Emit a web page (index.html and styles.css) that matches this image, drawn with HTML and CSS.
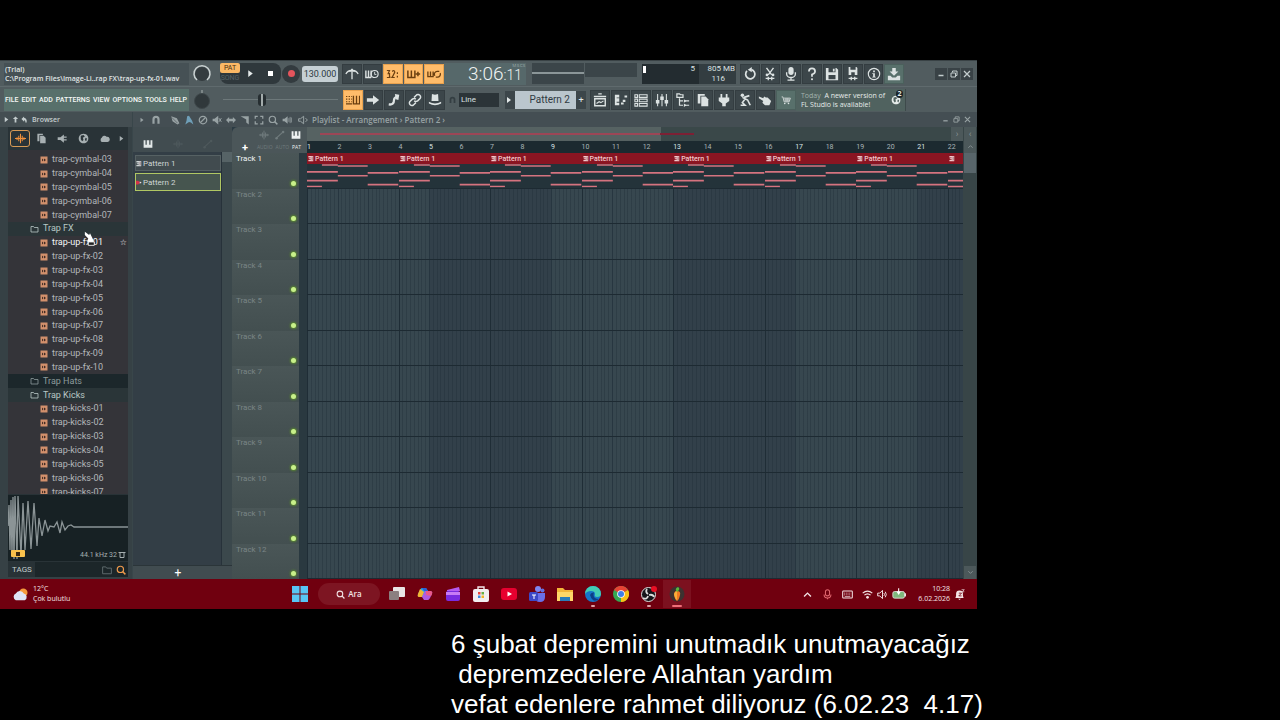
FILE: index.html
```
<!DOCTYPE html>
<html lang="tr">
<head>
    <meta charset="UTF-8">
    <title>FL Studio</title>
    <link rel="stylesheet" href="styles.css">
</head>
<body>
    <!-- icon sprite -->
    <svg class="sprite" aria-hidden="true">
        <symbol id="i-metro" viewBox="0 0 16 16"><path d="M1 8q2-4 6-4M15 8q-2-4-6-4M8 14V2" fill="none" stroke="currentColor" stroke-width="1.5"/><path d="M4 6l4-4 4 4-3-1H7z"/></symbol>
        <symbol id="i-wait" viewBox="0 0 16 16"><path d="M1 4v8h6M4 4v8M7 4v8" fill="none" stroke="currentColor" stroke-width="1.6"/><circle cx="11" cy="8" r="4" fill="none" stroke="currentColor" stroke-width="1.3"/><path d="M11 5.500v3h2" fill="none" stroke="currentColor"/></symbol>
        <symbol id="i-count" viewBox="0 0 16 16"><path d="M1 4h3L2.500 7.500H4V12H1M7 5q3-2 3 1l-3 6h3M13 6v2M13 10v2M5.500 11v1" fill="none" stroke="currentColor" stroke-width="1.4"/></symbol>
        <symbol id="i-over" viewBox="0 0 16 16"><path d="M1 4v8h8V4M5 4v8M10 8h5M12.500 5.500v5" fill="none" stroke="currentColor" stroke-width="1.7"/></symbol>
        <symbol id="i-loop" viewBox="0 0 16 16"><path d="M1 5v6h6V5M4 5v6M9 10a3.200 3.200 0 0 1 3-5h2M15 7a3.200 3.200 0 0 1-3 4.500h-2" fill="none" stroke="currentColor" stroke-width="1.5"/></symbol>
        <symbol id="i-undo" viewBox="0 0 16 16"><path d="M4.500 4.500a5.300 5.300 0 1 0 5-1.500" fill="none" stroke="currentColor" stroke-width="2"/><path d="M10 0v6L5.500 3z"/></symbol>
        <symbol id="i-cut" viewBox="0 0 16 16"><path d="M4 1l6 8M12 1L6 9" fill="none" stroke="currentColor" stroke-width="1.600"/><circle cx="4.500" cy="9" r="1.500"/><circle cx="11.500" cy="9" r="1.500"/><path d="M3 13h10M6 11v4M10 11v4" stroke="currentColor" stroke-width="1.500"/></symbol>
        <symbol id="i-mic" viewBox="0 0 16 16"><rect x="5" y="0" width="6" height="9" rx="3"/><path d="M3 6v2a5 4 0 0 0 10 0V6M8 12v3M4 15h8" fill="none" stroke="currentColor" stroke-width="1.500"/></symbol>
        <symbol id="i-help" viewBox="0 0 16 16"><path d="M4.500 5q0-3.500 3.500-3.500T11.500 5Q11.500 7 8 8.500V11" fill="none" stroke="currentColor" stroke-width="2"/><rect x="7" y="13" width="2" height="2"/></symbol>
        <symbol id="i-save" viewBox="0 0 16 16"><path fill-rule="evenodd" d="M1 1h12l2 2v12H1zM4 1v5h8V1zM4 9v5h8V9zM9 2h2v3H9z"/></symbol>
        <symbol id="i-savenew" viewBox="0 0 16 16"><path fill-rule="evenodd" d="M3 0h9l1 1v8H3zM5 0v3h6V0zM6 6v3h4V6z"/><path d="M3 13h10M6 11v4M10 11v4" stroke="currentColor" stroke-width="1.500"/></symbol>
        <symbol id="i-info" viewBox="0 0 16 16"><circle cx="8" cy="8" r="6.500" fill="none" stroke="currentColor" stroke-width="1.300"/><path d="M7 4h2v2H7zM6 7h3v4h1v1H6v-1h1V8H6z"/></symbol>
        <symbol id="i-down" viewBox="0 0 16 16"><path d="M6 1h4v4h3L8 10 3 5h3zM1 10h3l2 2h4l2-2h3v5H1z"/></symbol>
        <symbol id="i-keys" viewBox="0 0 16 16"><path d="M0 4h1.500M3 4h1.500M6 4h1M0 7h1.500M3 7h1.500M6 7h1M0 10h1.500M3 10h1.500M6 10h1M0 12.500h7" stroke="currentColor" stroke-width="1.400"/><path d="M8.500 3v9.500h7V3M12 3v9" fill="none" stroke="currentColor" stroke-width="1.500"/></symbol>
        <symbol id="i-right" viewBox="0 0 16 16"><path d="M1 6h7V2.500L15 8l-7 5.500V10H1z"/></symbol>
        <symbol id="i-slide" viewBox="0 0 16 16"><path d="M2 13q6 1 6-5 0-3 4-4" fill="none" stroke="currentColor" stroke-width="2.600"/><path d="M9 1l5 1-1 6-3-1z"/></symbol>
        <symbol id="i-link" viewBox="0 0 16 16"><path d="M7 5l3-3q2-1 3.500.5t.5 3.500l-3 3q-2 1.500-4 0M9 11l-3 3q-2 1-3.500-.5T2 10l3-3q2-1.500 4 0" fill="none" stroke="currentColor" stroke-width="1.700"/></symbol>
        <symbol id="i-hat" viewBox="0 0 16 16"><path d="M4.500 1l3.500 1 3.500-1 .5 8H4z"/><path d="M1 10q7 4 14 0v2q-7 4-14 0z"/></symbol>
        <symbol id="i-playlist" viewBox="0 0 16 16"><path d="M1 4h14M2 6.500h12v8H2z" fill="none" stroke="currentColor" stroke-width="1.600"/><path d="M4 12l3-2 2 1 3-2M6 1h4" stroke="currentColor" stroke-width="1.300" fill="none"/></symbol>
        <symbol id="i-proll" viewBox="0 0 16 16"><path d="M1 2h5v3H3v1h3v4H3v1h3v3H1z"/><path d="M8 12h3M10 9h3M12 4h3" stroke="currentColor" stroke-width="2.500" fill="none"/></symbol>
        <symbol id="i-rack" viewBox="0 0 16 16"><path d="M1 2h3v3H1zM6 2h9v3H6zM1 7h3v3H1zM6 7h9v3H6zM1 12h3v3H1zM6 12h9v3H6z" fill="none" stroke="currentColor" stroke-width="1.200"/></symbol>
        <symbol id="i-mixer" viewBox="0 0 16 16"><path d="M3 1v14M8 1v14M13 1v14" stroke="currentColor" stroke-width="1.200"/><rect x="1" y="8" width="4" height="4"/><rect x="6" y="4" width="4" height="4"/><rect x="11" y="8" width="4" height="4"/></symbol>
        <symbol id="i-tree" viewBox="0 0 16 16"><path d="M1 1h3l1 1h3v3H1zM4 6v8h4M4 9h4M10 9h5M10 14h5" fill="none" stroke="currentColor" stroke-width="1.400"/><path d="M9 7l3 2-3 2zM9 12l3 2-3 2z"/></symbol>
        <symbol id="i-files" viewBox="0 0 16 16"><path d="M2 1h8v2H5v9H2z"/><path d="M6 4h5l3 3v8H6z"/></symbol>
        <symbol id="i-plug" viewBox="0 0 16 16"><path d="M4 1h2v4h4V1h2v4h2v4l-4 3v3H6v-3L2 9V5h2z"/></symbol>
        <symbol id="i-tool" viewBox="0 0 16 16"><circle cx="5" cy="2.500" r="2"/><path d="M5 5l6 3 3 6M8 7l-3 4 3 3H3M7 5l6-2" stroke="currentColor" stroke-width="1.900" fill="none"/></symbol>
        <symbol id="i-hand" viewBox="0 0 16 16"><path d="M1 4l5 2 1-2 2 1 2 0 4 4-2 5H8L5 11l1-2-5-3z"/></symbol>
        <symbol id="i-cart" viewBox="0 0 16 16"><path d="M1 3h2l2 8h8l2-6H4M5 8h9M8 5v6M11 5v6" fill="none" stroke="currentColor" stroke-width="1.300"/><circle cx="6" cy="13.500" r="1.300"/><circle cx="12" cy="13.500" r="1.300"/></symbol>
        <symbol id="i-globe" viewBox="0 0 16 16"><path fill-rule="evenodd" d="M8 1a7 7 0 1 0 .1 0zM4 4l4-1 2 2-3 2 1 3-2 2-2-3zM11 7l2 1-1 4-2-2z"/></symbol>
        <symbol id="i-magnet" viewBox="0 0 16 16"><path d="M4 14V7a4 4 0 0 1 8 0v7" fill="none" stroke="currentColor" stroke-width="3.500"/></symbol>
        <symbol id="i-pencil" viewBox="0 0 16 16"><path d="M2 2l9 3 4 8-3 2-8-5z" /><path d="M3 4l9 9" stroke="#454f54"/></symbol>
        <symbol id="i-brush" viewBox="0 0 16 16"><path d="M5 2l3-1 5 8 2 6-4-3-3-1-6 4 2-6z"/></symbol>
        <symbol id="i-ban" viewBox="0 0 16 16"><circle cx="8" cy="8" r="6" fill="none" stroke="currentColor" stroke-width="2"/><path d="M4 12l8-8" stroke="currentColor" stroke-width="2"/></symbol>
        <symbol id="i-mute" viewBox="0 0 16 16"><path d="M1 6h3l6-5v14l-6-5H1z"/><path d="M11 5l4 6M15 5l-4 6" stroke="currentColor" stroke-width="1.500"/></symbol>
        <symbol id="i-slip" viewBox="0 0 16 16"><path d="M0 8l5-5v3h6V3l5 5-5 5v-3H5v3z"/></symbol>
        <symbol id="i-slice" viewBox="0 0 16 16"><path d="M1 2h13v13l-4-3V7z"/></symbol>
        <symbol id="i-select" viewBox="0 0 16 16"><path d="M2 6V2h4M10 2h4v4M14 10v4h-4M6 14H2v-4" fill="none" stroke="currentColor" stroke-width="2"/></symbol>
        <symbol id="i-zoom" viewBox="0 0 16 16"><circle cx="7" cy="7" r="5" fill="none" stroke="currentColor" stroke-width="1.900"/><path d="M10.500 10.500L15 15" stroke="currentColor" stroke-width="2.300"/></symbol>
        <symbol id="i-sound" viewBox="0 0 16 16"><path d="M1 6h3l5-4v12l-5-4H1z"/><path d="M11 5v6M13 3v10M15 4v8" stroke="currentColor" stroke-width="1.200"/></symbol>
        <symbol id="i-speaker" viewBox="0 0 16 16"><path d="M1 6h3l5-4v12l-5-4H1zM12 5l3 3-3 3" fill="none" stroke="currentColor" stroke-width="1.600"/></symbol>
        <symbol id="i-wave" viewBox="0 0 16 16"><path d="M0 8h16M3 6v4M5.500 4v8M8 1v14M10.500 4v8M13 6v4" stroke="currentColor" stroke-width="1.500"/></symbol>
        <symbol id="i-horn" viewBox="0 0 16 16"><path d="M1 6h4l5-4v3h4v2h-4v2h4v2h-4v3l-5-4H1z"/></symbol>
        <symbol id="i-cloud" viewBox="0 0 16 16"><path d="M4 13a3.500 3.500 0 0 1 0-6 4 4 0 0 1 7-1.500A3.800 3.800 0 0 1 12.500 13z"/></symbol>
        <symbol id="i-piano" viewBox="0 0 16 16"><path d="M1 2h3v7h2V2h4v7h2V2h3v12H1z"/></symbol>
        <symbol id="i-line" viewBox="0 0 16 16"><path d="M2 13L13 3" stroke="currentColor" stroke-width="2"/><circle cx="2.500" cy="13" r="2"/><circle cx="13" cy="3" r="2"/></symbol>
        <symbol id="i-folder" viewBox="0 0 16 16"><path d="M1 3h5l1.500 2H15v9H1z" fill="none" stroke="currentColor" stroke-width="1.600"/></symbol>
        <symbol id="i-tri" viewBox="0 0 16 16"><path d="M4 2l8 6-8 6z"/></symbol>
        <symbol id="i-up" viewBox="0 0 16 16"><path d="M8 1l6 6h-4v8H6V7H2z"/></symbol>
        <symbol id="i-back" viewBox="0 0 16 16"><path d="M7 1v3q7 1 6 11h-3q1-5-3-6v4L1 7z"/></symbol>
        <symbol id="i-min" viewBox="0 0 16 16"><path d="M3 11h10" stroke="currentColor" stroke-width="3"/></symbol>
        <symbol id="i-max" viewBox="0 0 16 16"><path d="M2 6h9v8H2zM5 5V2h9v9h-3" fill="none" stroke="currentColor" stroke-width="2"/></symbol>
        <symbol id="i-close" viewBox="0 0 16 16"><path d="M2 2l12 12M14 2L2 14" stroke="currentColor" stroke-width="2.500"/></symbol>
        <symbol id="i-chev" viewBox="0 0 16 16"><path d="M3 11l5-5 5 5" fill="none" stroke="currentColor" stroke-width="2"/></symbol>
        <symbol id="i-sample" viewBox="0 0 16 16"><rect x="1" y="1" width="14" height="14" fill="#d2906c"/><path d="M4 5v6l3-3zM8 5v6l4-3z" fill="#3d2822"/></symbol>
        <symbol id="i-pat" viewBox="0 0 16 16"><path d="M1 1h13v14H1v-3h6v-2H2V7h5V5H1z"/><path d="M11 3v10" stroke="#5a2028" stroke-width="1.500"/></symbol>
        <symbol id="i-marker" viewBox="0 0 16 16"><path d="M0 3h6l5 5-5 5H0z"/><path d="M10 5l5 3-5 3z" fill="#f0dfe2"/></symbol>
        <symbol id="notes" viewBox="0 0 92 24" preserveAspectRatio="none"><path d="M15 1h16M31 2h30M0 8h31M61 9h31M31 12h30M0 17h31M61 21h31M0 23h15" stroke="#d5737f" stroke-width="1.700"/></symbol>
    </svg>

    <main class="recording">
        <section class="daw">
            <header class="toolbar">
                <div class="row">
                    <div class="hint">(Trial)<br>C:\Program Files\Image-Li..rap FX\trap-up-fx-01.wav</div>
                    <svg class="knob" viewBox="0 0 20 20"><circle cx="10" cy="10" r="7" fill="#343c3f"/><path d="M5 16a8 8 0 1 1 10 0" fill="none" stroke="#c9d1d1" stroke-width="1.500"/></svg>
                    <div class="transport">
                        <div class="mode"><button class="pat">PAT</button><button class="song">SONG</button></div>
                        <button aria-label="Play"><svg class="ic"><use href="#i-tri"/></svg></button>
                        <button aria-label="Stop"><span class="stop"></span></button>
                    </div>
                    <button class="record" aria-label="Record"><span></span></button>
                    <input class="tempo" aria-label="Tempo" value="130.000">
                    <div class="tools five">
                        <button aria-label="Metronome"><svg class="ic"><use href="#i-metro"/></svg></button>
                        <button aria-label="Wait for input"><svg class="ic"><use href="#i-wait"/></svg></button>
                        <button class="on" aria-label="Countdown"><svg class="ic"><use href="#i-count"/></svg></button>
                        <button class="on" aria-label="Overdub"><svg class="ic"><use href="#i-over"/></svg></button>
                        <button class="on" aria-label="Loop record"><svg class="ic"><use href="#i-loop"/></svg></button>
                    </div>
                    <div class="clock"><span>3:06</span><small>:11</small><sup>M:S:CS</sup></div>
                    <div class="scope"><i></i><i></i></div>
                    <div class="cpu">
                        <div class="meter"></div>
                        <span>5</span><span>805 MB</span>
                        <span></span><span class="voices">116</span>
                    </div>
                    <div class="tools eight">
                        <button aria-label="Undo"><svg class="ic"><use href="#i-undo"/></svg></button>
                        <button aria-label="Cut"><svg class="ic"><use href="#i-cut"/></svg></button>
                        <button aria-label="Record audio"><svg class="ic"><use href="#i-mic"/></svg></button>
                        <button aria-label="Help"><svg class="ic"><use href="#i-help"/></svg></button>
                        <button aria-label="Save"><svg class="ic"><use href="#i-save"/></svg></button>
                        <button aria-label="Save new version"><svg class="ic"><use href="#i-savenew"/></svg></button>
                        <button aria-label="Info"><svg class="ic"><use href="#i-info"/></svg></button>
                        <button class="news" aria-label="Download"><svg class="ic"><use href="#i-down"/></svg></button>
                    </div>
                    <div class="winbtns">
                        <button aria-label="Minimize"><svg><use href="#i-min"/></svg></button>
                        <button aria-label="Restore"><svg><use href="#i-max"/></svg></button>
                        <button aria-label="Close"><svg><use href="#i-close"/></svg></button>
                    </div>
                </div>
                <div class="row">
                    <nav class="menu">
                        <a href="#">FILE</a><a href="#">EDIT</a><a href="#">ADD</a><a href="#">PATTERNS</a><a href="#">VIEW</a><a href="#">OPTIONS</a><a href="#">TOOLS</a><a href="#">HELP</a>
                    </nav>
                    <svg class="knob" viewBox="0 0 20 20"><circle cx="10" cy="11" r="7.500" fill="#30383b" stroke="#3e474a"/><path d="M10 0v3" stroke="#a8b0b0"/></svg>
                    <input class="pitch" type="range" aria-label="Pitch" value="33">
                    <div class="tools five">
                        <button class="on" aria-label="Typing keyboard"><svg class="ic"><use href="#i-keys"/></svg></button>
                        <button aria-label="Auto scroll"><svg class="ic"><use href="#i-right"/></svg></button>
                        <button aria-label="Slide"><svg class="ic"><use href="#i-slide"/></svg></button>
                        <button aria-label="Link"><svg class="ic"><use href="#i-link"/></svg></button>
                        <button aria-label="Hat"><svg class="ic"><use href="#i-hat"/></svg></button>
                    </div>
                    <svg class="snap-ic"><use href="#i-magnet"/></svg>
                    <select class="snap" aria-label="Snap"><option>Line</option></select>
                    <div class="pattern-box">
                        <button aria-label="Pattern menu"><svg><use href="#i-tri"/></svg></button>
                        <button class="name">Pattern 2</button>
                        <button aria-label="Add pattern">+</button>
                    </div>
                    <div class="tools ten">
                        <button aria-label="Playlist"><svg class="ic"><use href="#i-playlist"/></svg></button>
                        <button aria-label="Piano roll"><svg class="ic"><use href="#i-proll"/></svg></button>
                        <button aria-label="Channel rack"><svg class="ic"><use href="#i-rack"/></svg></button>
                        <button aria-label="Mixer"><svg class="ic"><use href="#i-mixer"/></svg></button>
                        <button aria-label="Browser"><svg class="ic"><use href="#i-tree"/></svg></button>
                        <button aria-label="Project files"><svg class="ic"><use href="#i-files"/></svg></button>
                        <button aria-label="Plugins"><svg class="ic"><use href="#i-plug"/></svg></button>
                        <button aria-label="Tools"><svg class="ic"><use href="#i-tool"/></svg></button>
                        <button aria-label="Touch"><svg class="ic"><use href="#i-hand"/></svg></button>
                        <button class="news" aria-label="Shop"><svg><use href="#i-cart"/></svg></button>
                    </div>
                    <div class="update">
                        <p><span>Today</span>&nbsp; A newer version of<br>FL Studio is available!</p>
                        <div class="globe"><svg><use href="#i-globe"/></svg><b>2</b></div>
                    </div>
                </div>
            </header>

            <div class="workspace">
                <aside class="browser">
                    <div class="browser-head">
                        <svg><use href="#i-tri"/></svg><svg><use href="#i-up"/></svg><svg><use href="#i-back"/></svg>
                        <span>Browser</span>
                    </div>
                    <div class="browser-tabs">
                        <button class="active" aria-label="Sounds"><svg><use href="#i-wave"/></svg></button>
                        <button aria-label="Files"><svg><use href="#i-files"/></svg></button>
                        <button aria-label="Plugins"><svg><use href="#i-horn"/></svg></button>
                        <button aria-label="Online"><svg><use href="#i-globe"/></svg></button>
                        <button aria-label="Cloud"><svg><use href="#i-cloud"/></svg></button>
                        <button class="more" aria-label="More"><svg><use href="#i-tri"/></svg></button>
                    </div>
                    <div class="list">
                        <ul>
                            <li><svg><use href="#i-sample"/></svg>trap-cymbal-02</li>
                            <li><svg><use href="#i-sample"/></svg>trap-cymbal-03</li>
                            <li><svg><use href="#i-sample"/></svg>trap-cymbal-04</li>
                            <li><svg><use href="#i-sample"/></svg>trap-cymbal-05</li>
                            <li><svg><use href="#i-sample"/></svg>trap-cymbal-06</li>
                            <li><svg><use href="#i-sample"/></svg>trap-cymbal-07</li>
                            <li class="folder"><svg><use href="#i-folder"/></svg>Trap FX</li>
                            <li class="selected"><svg><use href="#i-sample"/></svg>trap-up-fx-01<span class="star">☆</span></li>
                            <li><svg><use href="#i-sample"/></svg>trap-up-fx-02</li>
                            <li><svg><use href="#i-sample"/></svg>trap-up-fx-03</li>
                            <li><svg><use href="#i-sample"/></svg>trap-up-fx-04</li>
                            <li><svg><use href="#i-sample"/></svg>trap-up-fx-05</li>
                            <li><svg><use href="#i-sample"/></svg>trap-up-fx-06</li>
                            <li><svg><use href="#i-sample"/></svg>trap-up-fx-07</li>
                            <li><svg><use href="#i-sample"/></svg>trap-up-fx-08</li>
                            <li><svg><use href="#i-sample"/></svg>trap-up-fx-09</li>
                            <li><svg><use href="#i-sample"/></svg>trap-up-fx-10</li>
                            <li class="folder closed"><svg><use href="#i-folder"/></svg>Trap Hats</li>
                            <li class="folder"><svg><use href="#i-folder"/></svg>Trap Kicks</li>
                            <li><svg><use href="#i-sample"/></svg>trap-kicks-01</li>
                            <li><svg><use href="#i-sample"/></svg>trap-kicks-02</li>
                            <li><svg><use href="#i-sample"/></svg>trap-kicks-03</li>
                            <li><svg><use href="#i-sample"/></svg>trap-kicks-04</li>
                            <li><svg><use href="#i-sample"/></svg>trap-kicks-05</li>
                            <li><svg><use href="#i-sample"/></svg>trap-kicks-06</li>
                            <li><svg><use href="#i-sample"/></svg>trap-kicks-07</li>
                        </ul>
                        <svg class="cursor" viewBox="0 0 14 18"><path d="M1 1l5 4 1-2 4 8v5H6l-2-5 1-2-4-4z" fill="#fff"/><path d="M5 13h7v4H5z" fill="#222" stroke="#fff"/></svg>
                    </div>
                    <div class="preview">
                        <svg viewBox="0 0 120 66" preserveAspectRatio="none"><path d="M0 31L1 10 2 55 3 5 4 60 5 2 6 64 7 1 9 64 10 1 13 60 15 8 17 55 20 6 23 54 26 8 29 51 31 23 34 41 37 25 40 36 42 31 46 32 49 27 52 38 54 27 57 35 60 31 63 30 66 32H120" fill="none" stroke="#8b9496" stroke-width="1.300"/></svg>
                        <span class="playing"></span>
                        <span class="rate">44.1 kHz 32<svg viewBox="0 0 16 16"><path d="M1 3h14M4 4v9h8V4" fill="none" stroke="currentColor" stroke-width="2"/></svg></span>
                    </div>
                    <div class="tags">
                        <label for="tags">TAGS</label>
                        <input id="tags">
                        <svg><use href="#i-folder"/></svg>
                        <svg class="find"><use href="#i-zoom"/></svg>
                    </div>
                </aside>

                <section class="playlist">
                    <div class="playlist-head">
                        <svg class="dim"><use href="#i-tri"/></svg>
                        <svg><use href="#i-magnet"/></svg>
                        <div class="brushes">
                            <svg><use href="#i-pencil"/></svg><svg class="blue"><use href="#i-brush"/></svg><svg><use href="#i-ban"/></svg><svg><use href="#i-mute"/></svg><svg><use href="#i-slip"/></svg><svg><use href="#i-slice"/></svg><svg><use href="#i-select"/></svg><svg><use href="#i-zoom"/></svg><svg><use href="#i-sound"/></svg>
                        </div>
                        <svg><use href="#i-speaker"/></svg>
                        <span>Playlist - Arrangement › Pattern 2 ›</span>
                        <div class="panelbtns"><svg><use href="#i-min"/></svg><svg><use href="#i-max"/></svg><svg><use href="#i-close"/></svg></div>
                    </div>

                    <div class="playlist-body">
                        <div class="picker">
                            <div class="picker-top"><svg><use href="#i-piano"/></svg><svg class="faint"><use href="#i-wave"/></svg><svg class="faint"><use href="#i-line"/></svg></div>
                            <div class="picker-list">
                                <button><svg><use href="#i-pat"/></svg>Pattern 1</button>
                                <button class="selected"><svg><use href="#i-marker"/></svg>Pattern 2</button>
                            </div>
                            <div class="picker-scroll"><i></i></div>
                            <button class="picker-add" aria-label="Add pattern">+</button>
                        </div>

                        <div class="arrange">
                            <div class="corner">
                                <div><svg><use href="#i-wave"/></svg><svg><use href="#i-line"/></svg><svg class="lit"><use href="#i-piano"/></svg></div>
                                <div><b>+</b><small>AUDIO</small><small>AUTO</small><small class="lit">PAT</small></div>
                            </div>
                            <div class="overview"><span></span><i></i><button aria-label="Scroll right">›</button></div>
                            <ol class="ruler">
                                <li>1</li><li>2</li><li>3</li><li>4</li><li>5</li><li>6</li><li>7</li><li>8</li><li>9</li><li>10</li><li>11</li><li>12</li><li>13</li><li>14</li><li>15</li><li>16</li><li>17</li><li>18</li><li>19</li><li>20</li><li>21</li><li>22</li>
                            </ol>
                            <ol class="tracks">
                                <li class="used">Track 1</li><li>Track 2</li><li>Track 3</li><li>Track 4</li><li>Track 5</li><li>Track 6</li><li>Track 7</li><li>Track 8</li><li>Track 9</li><li>Track 10</li><li>Track 11</li><li>Track 12</li>
                            </ol>
                            <div class="lanes">
                                <div class="clips">
                                    <div class="clip"><h4><svg><use href="#i-pat"/></svg>Pattern 1</h4><svg class="notes"><use href="#notes"/></svg></div>
                                    <div class="clip"><h4><svg><use href="#i-pat"/></svg>Pattern 1</h4><svg class="notes"><use href="#notes"/></svg></div>
                                    <div class="clip"><h4><svg><use href="#i-pat"/></svg>Pattern 1</h4><svg class="notes"><use href="#notes"/></svg></div>
                                    <div class="clip"><h4><svg><use href="#i-pat"/></svg>Pattern 1</h4><svg class="notes"><use href="#notes"/></svg></div>
                                    <div class="clip"><h4><svg><use href="#i-pat"/></svg>Pattern 1</h4><svg class="notes"><use href="#notes"/></svg></div>
                                    <div class="clip"><h4><svg><use href="#i-pat"/></svg>Pattern 1</h4><svg class="notes"><use href="#notes"/></svg></div>
                                    <div class="clip"><h4><svg><use href="#i-pat"/></svg>Pattern 1</h4><svg class="notes"><use href="#notes"/></svg></div>
                                    <div class="clip cut"><h4><svg><use href="#i-pat"/></svg></h4><svg class="notes" viewBox="0 0 15 24" preserveAspectRatio="none"><path d="M0 8h15M0 17h15M0 23h15" stroke="#d5737f" stroke-width="1.700"/></svg></div>
                                </div>
                                <div></div><div></div><div></div><div></div><div></div><div></div><div></div><div></div><div></div><div></div><div></div>
                            </div>
                            <div class="vscroll">
                                <button aria-label="Zoom">‹</button>
                                <button aria-label="Scroll up"><svg><use href="#i-chev"/></svg></button>
                                <i></i>
                                <button aria-label="Scroll down"><svg class="flip"><use href="#i-chev"/></svg></button>
                            </div>
                        </div>
                    </div>
                </section>
            </div>
        </section>

        <footer class="taskbar">
            <div class="weather">
                <svg viewBox="0 0 18 16"><circle cx="12" cy="6" r="4.500" fill="#f59a3c"/><path d="M4 14a3.800 3.800 0 0 1 0-7 4.600 4.600 0 0 1 8.500 0 3.700 3.700 0 0 1 1 7z" fill="#dfe4f5"/></svg>
                <p>12°C<br>Çok bulutlu</p>
            </div>
            <div class="apps">
                <button aria-label="Start"><svg viewBox="0 0 16 16"><path d="M0 0h7.500v7.500H0zM8.500 0H16v7.500H8.500zM0 8.500h7.500V16H0zM8.500 8.500H16V16H8.500z" fill="#58c4f5"/></svg></button>
                <button class="search"><svg><use href="#i-zoom"/></svg>Ara</button>
                <button aria-label="Task view"><svg viewBox="0 0 16 16"><rect x="4" y="1" width="12" height="10" rx="1" fill="#e9e4e4"/><rect x="0" y="5" width="10" height="9" rx="1" fill="#8b7f80"/></svg></button>
                <button aria-label="Copilot"><svg viewBox="0 0 16 16"><path d="M5 2h4l2 3-3 6H2q-2-1-1-3l2-4q1-2 2-2z" fill="#2aa7e0"/><path d="M3 3L1 8q-1 3 1 3h3l2-5z" fill="#f2b632"/><path d="M11 14H7l-2-3 3-6h6q2 1 1 3l-2 4q-1 2-2 2z" fill="#b05ae0"/><path d="M9 5h5q2 1 1 3l-1 2-5-1z" fill="#e95a8a"/><path d="M5 2h4l2 3H7z" fill="#2a5fd8"/></svg></button>
                <button aria-label="Clipchamp"><svg viewBox="0 0 16 16"><path d="M2 4l12-3 1 4H2z" fill="#b65af0"/><rect x="1" y="5" width="14" height="10" rx="2" fill="#7a2be0"/><path d="M1 9h14V6H1z" fill="#c77bf5"/></svg></button>
                <button aria-label="Store"><svg viewBox="0 0 16 16"><path d="M5 4V1h6v3" fill="none" stroke="#f2e6ea" stroke-width="1.400"/><rect x="0" y="3" width="16" height="13" rx="2" fill="#f3eef0"/><path d="M5 6h2.500v2.500H5z" fill="#e8453c"/><path d="M8.500 6H11v2.500H8.500z" fill="#67ad45"/><path d="M5 9.500h2.500V12H5z" fill="#3b8de0"/><path d="M8.500 9.500H11V12H8.500z" fill="#f0b429"/></svg></button>
                <button aria-label="YouTube"><svg viewBox="0 0 16 16"><rect x="0" y="2" width="16" height="12" rx="3" fill="#e8002f"/><path d="M6.500 5.500v5L11 8z" fill="#fff"/></svg></button>
                <button aria-label="Teams"><svg viewBox="0 0 16 16"><circle cx="9" cy="3" r="3" fill="#7f86f0"/><circle cx="13.500" cy="4.500" r="2" fill="#6470e0"/><path d="M5 7h11v4q0 5-5 5t-6-5z" fill="#6a6fe8"/><rect x="0" y="6" width="9" height="9" rx="1.500" fill="#3c48c8"/><path d="M3 9h4M5 9v4" stroke="#fff"/></svg></button>
                <button aria-label="Explorer"><svg viewBox="0 0 16 16"><path d="M0 2h6l2 2h8v11H0z" fill="#f4b63a"/><path d="M0 6h16v9H0z" fill="#ffd768"/><path d="M3 11h10v4H3z" fill="#2c7cb8"/></svg></button>
                <button class="open" aria-label="Edge"><svg viewBox="0 0 16 16"><circle cx="8" cy="8" r="8" fill="#1676c9"/><path d="M0 8a8 8 0 0 1 16 0q0 3-4 3-3 0-2-3 0-3-4-3-4 0-6 3z" fill="#43cdb4"/><path d="M5 9q1-3 4-2.500Q7 13 14 13q-6 5-9-4z" fill="#0d3f86"/></svg></button>
                <button aria-label="Chrome"><svg viewBox="0 0 16 16"><circle cx="8" cy="8" r="8" fill="#35a852"/><path d="M8 8L1 4a8 8 0 0 1 14 0z" fill="#e54335"/><path d="M8 8l7-4a8 8 0 0 1-7 12z" fill="#fbc116"/><circle cx="8" cy="8" r="3.800" fill="#fff"/><circle cx="8" cy="8" r="3" fill="#3f7fe8"/></svg></button>
                <button class="open" aria-label="OBS"><svg viewBox="0 0 16 16"><circle cx="7.500" cy="8.500" r="7" fill="#16161a" stroke="#ddd"/><path d="M7 8q-3-2-1-5M8 9q4-1 5 2M7 10q-1 4-5 2" fill="none" stroke="#ddd" stroke-width="1.800"/><circle cx="13" cy="3" r="3" fill="#e80f24"/></svg></button>
                <button class="open current" aria-label="FL Studio"><svg viewBox="0 0 16 16"><circle cx="8" cy="8" r="7.500" fill="#3d3230"/><path d="M8 5q4 0 3 4-1 5-3 6-2-1-3-6 0-4 3-4z" fill="#f07a22"/><path d="M5 8q1-3 3-3v9q-2-1-3-6z" fill="#f8ae3a"/><path d="M8 6Q5 3 9 1q3 2-1 5z" fill="#5bb83c"/></svg></button>
            </div>
            <div class="tray">
                <svg><use href="#i-chev"/></svg>
                <svg class="tray-mic" viewBox="0 0 16 16"><rect x="5" y="1" width="6" height="9" rx="3" fill="none" stroke="currentColor" stroke-width="1.500"/><path d="M3 8a5 5 0 0 0 10 0M8 13v2" fill="none" stroke="currentColor" stroke-width="1.500"/></svg>
                <svg viewBox="0 0 16 16"><rect x="1" y="3" width="14" height="10" rx="1" fill="none" stroke="currentColor" stroke-width="1.500"/><path d="M3 6h10M3 8.500h10" stroke="currentColor" stroke-dasharray="1.500 1"/><path d="M4 11h8" stroke="currentColor"/></svg>
                <div class="status">
                    <svg viewBox="0 0 16 16"><path d="M1 6q7-6 14 0M3.500 9q4.500-4 9 0" fill="none" stroke="currentColor" stroke-width="1.700"/><circle cx="8" cy="12" r="2"/></svg>
                    <svg viewBox="0 0 16 16"><path d="M1 6h3l4-4v12l-4-4H1zM10 6q2 2 0 4M12 4q3 4 0 8" fill="none" stroke="currentColor" stroke-width="1.400"/></svg>
                    <svg class="battery" viewBox="0 0 18 14"><rect x="1" y="4" width="14" height="8" rx="2" fill="#7fb87c" stroke="#e6e0e0"/><path d="M16 6v4M8 0v6M6 4l2 3 2-3" fill="none" stroke="#fff" stroke-width="1.300"/></svg>
                </div>
                <p>10:28<br>6.02.2026</p>
                <svg class="bell" viewBox="0 0 16 16"><path d="M8 2q5 0 5 5v3l1 3H2l1-3V7q0-5 5-5zM6 14h4l-2 2z"/><path d="M7 6h4l-4 4h4" fill="none" stroke="#70000f" stroke-width="1.200"/><path d="M11 1h4l-3 3h3" fill="none" stroke="currentColor"/></svg>
            </div>
        </footer>
    </main>

    <p class="caption">6 şubat depremini unutmadık unutmayacağız
 depremzedelere Allahtan yardım
vefat edenlere rahmet diliyoruz (6.02.23  4.17)</p>
</body>
</html>
```
FILE: styles.css
```
* {
    box-sizing: border-box;
}
body {
    margin: 0;
    height: 100vh;
    padding-top: 60px;
    display: flex;
    flex-direction: column;
    background-color: #000;
    color: #c3cccd;
    font-family: Roboto, "Open Sans", sans-serif;
    font-size: 9px;
    overflow: hidden;
}
p, ul, ol, h4 {
    margin: 0;
    padding: 0;
    list-style: none;
}
button, input, select {
    margin: 0;
    padding: 0;
    border: 0;
    background: none;
    color: inherit;
    font: inherit;
}
svg {
    display: block;
    flex: none;
    width: 10px;
    height: 10px;
    fill: currentColor;
}
.sprite {
    position: absolute;
    width: 0;
    height: 0;
}
.recording {
    flex: 1;
    min-height: 0;
    margin-right: 303px;
    display: flex;
    flex-direction: column;
}
.daw {
    flex: 1;
    min-height: 0;
    display: flex;
    flex-direction: column;
    background-color: #414b50;
}

/* top toolbar */
.toolbar {
    background-color: #515c5f;
    border-top: 1px solid #394245;
}
.row {
    display: flex;
    align-items: center;
    height: 25px;
    padding: 0 4px;
}
.row + .row {
    height: 26px;
    border-top: 1px solid #5f6a6d;
}
.hint, .menu {
    width: 185px;
    height: 22px;
    background-color: #465155;
    color: #e0e6e6;
    white-space: nowrap;
}
.hint {
    padding: 2px 1px;
    font-family: "Open Sans", sans-serif;
    font-size: 7px;
    font-weight: 600;
    line-height: 9px;
}
.menu {
    display: flex;
    align-items: center;
    justify-content: space-between;
    padding: 0 2px 0 1px;
    background-color: #58706b;
    font-size: 7px;
    font-weight: 500;
}
.menu a {
    color: #f4f8f6;
    text-decoration: none;
}
.knob {
    width: 20px;
    height: 20px;
    margin: 0 11px 0 3px;
}
.row + .row .knob {
    margin-right: 3px;
}
.transport {
    display: flex;
    width: 61px;
    height: 21px;
    margin-left: -3px;
    border-radius: 8px;
    background-color: #2f383c;
}
.transport button {
    width: 20px;
    display: grid;
    place-items: center;
    color: #e5eaea;
}
.transport .mode button {
    height: 10px;
    border-radius: 2px;
    font-size: 7px;
}
.transport .mode .pat {
    background-color: #fbb865;
    color: #4a3013;
}
.transport .mode .song {
    color: #586266;
}
.stop {
    width: 5px;
    height: 5px;
    background-color: #fff;
}
.transport .ic {
    width: 9px;
    height: 9px;
}
.record {
    width: 18px;
    height: 18px;
    margin: 0 2px 0 1px;
    display: grid;
    place-items: center;
    border-radius: 50%;
    background-color: #333b3f;
}
.record span {
    width: 7px;
    height: 7px;
    border-radius: 50%;
    background-color: #e4545c;
}
.tempo {
    width: 36px;
    height: 16px;
    border-radius: 3px;
    background-color: #c6d0d4;
    color: #2c3a42;
    text-align: center;
}
.tools {
    display: flex;
    gap: 1px;
}
.tools button {
    flex: 1;
    height: 20px;
    display: grid;
    place-items: center;
    background-color: #3c464a;
    border: 1px solid #343d41;
    color: #dce2e2;
}
.tools .ic {
    width: 14px;
    height: 14px;
}
.tools .on {
    background-color: #ffbc6a;
    border-color: #e9a24e;
    color: #6b3f10;
}
.tools .news {
    background-color: #58706b;
    border-color: #4b605c;
}
.five {
    width: 102px;
    margin-left: 4px;
}
.eight {
    width: 164px;
}
.ten {
    width: 206px;
}
.clock {
    position: relative;
    width: 82px;
    height: 22px;
    display: flex;
    align-items: baseline;
    padding-left: 24px;
    line-height: 22px;
    background-color: #56686a;
    color: #eef3f3;
    font-size: 19px;
    font-weight: 300;
}
.clock small {
    font-size: 14px;
}
.clock sup {
    position: absolute;
    top: 0;
    right: 1px;
    line-height: 5px;
    font-size: 4px;
    color: #b5c0c0;
}
.scope {
    width: 105px;
    height: 21px;
    display: flex;
    gap: 1px;
    margin: 0 5px 0 6px;
}
.scope i {
    flex: 1;
    height: 14px;
    background-color: #3b4549;
}
.scope i:first-child {
    height: 21px;
    background: linear-gradient(#3b4549 9px, #8b9698 9px, #8b9698 11px, #3b4549 11px);
}
.cpu {
    width: 94px;
    height: 20px;
    margin-right: 4px;
    padding-right: 1px;
    display: grid;
    grid-template-columns: 53px 1fr;
    line-height: 10px;
    font-size: 8px;
    text-align: right;
    background: linear-gradient(90deg, #232c30 57px, #333d41 57px);
    color: #dce2e2;
    position: relative;
}
.voices {
    padding-right: 10px;
}
.meter {
    position: absolute;
    left: 1px;
    top: 2px;
    width: 3px;
    height: 7px;
    background-color: #fff;
}
.winbtns {
    display: flex;
    gap: 1px;
    margin-left: auto;
}
.winbtns button {
    width: 12px;
    height: 12px;
    display: grid;
    place-items: center;
    background-color: #394246;
}
.winbtns svg {
    width: 8px;
    height: 8px;
}
.pitch {
    appearance: none;
    width: 115px;
    height: 20px;
    margin: 0 1px 0 8px;
    background: linear-gradient(#6d787a, #6d787a) center / 100% 1px no-repeat;
}
.pitch::-webkit-slider-thumb {
    appearance: none;
    width: 8px;
    height: 12px;
    border-radius: 3px;
    background: linear-gradient(90deg, #262e31 3px, #a2abab 3px, #a2abab 5px, #262e31 5px);
}
.snap-ic {
    width: 9px;
    height: 8px;
    margin: 0 2px 0 3px;
    color: #343e42;
}
.snap {
    appearance: none;
    width: 40px;
    height: 14px;
    padding-left: 2px;
    background-color: #2b3438;
    color: #dce2e2;
    font-size: 8px;
}
.pattern-box {
    display: flex;
    height: 18px;
    margin: 0 4px 0 6px;
}
.pattern-box button {
    width: 10px;
    background-color: #3c464a;
    color: #e4e9e9;
}
.pattern-box svg {
    width: 8px;
    height: 8px;
}
.pattern-box .name {
    width: 61px;
    padding-right: 6px;
    background-color: #bac6cd;
    color: #2f3a42;
    font-size: 10px;
    text-align: right;
}
.update {
    display: flex;
    justify-content: space-between;
    align-items: center;
    width: 110px;
    height: 22px;
    padding: 0 4px 0 5px;
    background-color: #50625f;
    border-right: 1px solid #3e4a4b;
    line-height: 9px;
    color: #e6ecea;
    white-space: nowrap;
    font-family: "Open Sans", sans-serif;
    font-size: 7px;
}
.update span {
    color: #a3b2ae;
}
.globe {
    position: relative;
}
.globe b {
    position: absolute;
    top: -5px;
    right: -2px;
    width: 7px;
    height: 8px;
    line-height: 8px;
    border-radius: 4px;
    background-color: #1c2427;
    text-align: center;
}

/* browser */
.workspace {
    flex: 1;
    min-height: 0;
    display: flex;
}
.browser {
    width: 132px;
    padding: 0 4px 2px 8px;
    display: flex;
    flex-direction: column;
    background-color: #364145;
}
.browser-head {
    height: 15px;
    margin: 0 -4px 0 -8px;
    padding-left: 3px;
    display: flex;
    align-items: center;
    gap: 2px;
    background-color: #444e52;
    font-family: "Open Sans", sans-serif;
    font-size: 7px;
    font-weight: 600;
}
.browser-head svg {
    width: 7px;
    height: 7px;
}
.browser-head span {
    margin-left: 2px;
}
.browser-tabs {
    height: 23px;
    display: flex;
    align-items: center;
    background-color: #293337;
}
.browser-tabs button {
    width: 20px;
    height: 17px;
    margin-right: 1px;
    display: grid;
    place-items: center;
    flex: none;
    color: #a7b0b2;
}
.browser-tabs svg {
    width: 11px;
    height: 11px;
}
.browser-tabs .active {
    margin-left: 2px;
    border: 1px solid #d79a55;
    border-radius: 3px;
    color: #f2913b;
}
.browser-tabs .more {
    width: 12px;
}
.browser-tabs .more svg {
    width: 7px;
    height: 7px;
}
.list {
    position: relative;
    flex: 1;
    min-height: 0;
    overflow: hidden;
    background-color: #343439;
}
.list ul {
    height: calc(100% + 16px);
    margin-top: -11px;
    display: flex;
    flex-direction: column;
}
.list li {
    flex: 1;
    min-height: 0;
    display: flex;
    align-items: center;
    gap: 4px;
    padding-left: 32px;
    line-height: 13px;
    color: #b3b7b9;
}
.list li svg {
    width: 8px;
    height: 8px;
}
.list .folder {
    padding-left: 22px;
    background-color: #2a3538;
    color: #b9c8c6;
}
.list .folder svg {
    width: 9px;
}
.list .closed {
    background-color: #1c272b;
    color: #8d9b9c;
}
.list .selected {
    color: #f4f6f7;
}
.star {
    margin: 0 1px 0 auto;
    font: 8px "DejaVu Sans", sans-serif;
}
.cursor {
    position: absolute;
    left: 76px;
    top: 80px;
    width: 12px;
    height: 17px;
}
.list, .preview {
    border-bottom: 1px solid #293337;
}
.preview {
    position: relative;
    height: 67px;
    background-color: #172124;
}
.preview > svg {
    width: 100%;
    height: 66px;
}
.playing {
    position: absolute;
    left: 3px;
    bottom: 4px;
    width: 14px;
    height: 7px;
    border-radius: 1px;
    background: linear-gradient(#3c2a10, #3c2a10) center / 4px 4px no-repeat #f9c14c;
}
.rate {
    position: absolute;
    right: 2px;
    bottom: 0;
    display: flex;
    align-items: center;
    gap: 1px;
    color: #a6afb0;
    font-size: 7px;
    line-height: 12px;
}
.rate svg {
    width: 8px;
    height: 8px;
}
.tags {
    height: 15px;
    display: flex;
    align-items: center;
    gap: 2px;
    background-color: #1c2629;
    font-size: 8px;
}
.tags label {
    width: 27px;
    line-height: 15px;
    padding-left: 4px;
    background-color: #283236;
}
.tags input {
    flex: 1;
    min-width: 0;
}
.tags svg {
    color: #5d686b;
}
.tags .find {
    margin: 0 2px;
    color: #ef9a4c;
}

/* playlist */
.playlist {
    flex: 1;
    min-width: 0;
    display: flex;
    flex-direction: column;
    border-left: 1px solid #39464a;
}
.playlist-head {
    height: 15px;
    padding: 0 6px;
    display: flex;
    align-items: center;
    gap: 6px;
    background-color: #444e53;
    color: #98a2a4;
    font: 600 8px "Open Sans", sans-serif;
    white-space: nowrap;
}
.playlist-head .dim {
    width: 6px;
}
.brushes {
    display: flex;
    gap: 4px;
    margin: 0 0 0 3px;
}
.brushes svg {
    width: 10px;
    height: 10px;
}
.blue {
    color: #6f9fb8;
}
.playlist-head span {
    margin-left: -2px;
}
.panelbtns {
    display: flex;
    gap: 4px;
    margin-left: auto;
}
.panelbtns svg {
    width: 7px;
    height: 7px;
}
.playlist-body {
    flex: 1;
    min-height: 0;
    display: flex;
}
.picker {
    width: 99px;
    display: grid;
    grid-template: 25px 1fr 14px / 1fr 11px;
    background-color: #414c50;
}
.picker-top {
    grid-column: 1 / 3;
    display: flex;
    align-items: center;
    gap: 20px;
    padding: 9px 0 0 10px;
    color: #e2e8e8;
}
.faint {
    color: #4e595c;
}
.picker-list {
    padding: 3px 0 0 2px;
    background-color: #333e46;
    border-right: 1px solid #27323a;
}
.picker-list button {
    display: flex;
    align-items: center;
    width: 86px;
    height: 16px;
    margin-bottom: 2px;
    gap: 1px;
    border: 1px solid #566163;
    background-color: #414b4f;
    color: #ced5d5;
    font-size: 8px;
}
.picker-list svg {
    width: 6px;
    height: 7px;
}
.picker-list .selected {
    height: 18px;
    border-color: #b0c763;
    background-color: #46554f;
}
.picker-list .selected svg {
    color: #d4314a;
}
.picker-scroll {
    background-color: #3b484c;
    border-right: 1px solid #263034;
}
.picker-scroll i {
    display: block;
    height: 10px;
    background-color: #566366;
}
.picker-add {
    grid-column: 1 / 3;
    padding-right: 10px;
    border-top: 1px solid #2b3539;
    color: #fff;
    font-size: 12px;
    line-height: 12px;
}
.arrange {
    flex: 1;
    min-width: 0;
    display: grid;
    grid-template: 14px 12px 1fr / 75px 1fr 14px;
    background-color: #2b3b44;
}
.corner {
    grid-row: 1 / 3;
    padding: 2px 6px 0 10px;
    background-color: #4b5659;
    color: #707b7d;
    border-radius: 6px 0 0 0;
}
.corner div {
    display: flex;
    justify-content: flex-end;
    align-items: center;
    gap: 6px;
    height: 12px;
}
.corner div + div {
    gap: 3px;
}
.corner b {
    margin-right: auto;
    color: #fff;
    font-size: 11px;
}
.corner small {
    font: 5px "Open Sans", sans-serif;
}
.corner .lit {
    color: #eef2f2;
}
.overview {
    position: relative;
    display: flex;
    justify-content: flex-end;
    background-color: #3a4849;
}
.overview span {
    width: 54%;
    margin-right: auto;
    background-color: #566262;
}
.overview i {
    position: absolute;
    left: 2%;
    top: 6px;
    width: 57%;
    height: 2px;
    background: linear-gradient(90deg, #9c4656 91%, #7c2034 91%);
}
.overview button, .vscroll button {
    width: 12px;
    background-color: #4c585a;
    color: #8a9596;
}
.ruler {
    display: grid;
    grid-template-columns: repeat(43, 1fr);
    background-color: #1c2a30;
    color: #aab5b8;
    font-size: 7px;
    line-height: 13px;
}
.ruler li {
    grid-column: span 2;
}
.ruler li:last-child {
    grid-column: span 1;
}
.ruler li:nth-child(4n + 1) {
    color: #dde5e6;
}
.tracks, .lanes {
    display: grid;
    grid-template-rows: repeat(12, 1fr);
    min-height: 0;
}
.tracks {
    background: linear-gradient(90deg, #495557 67px, #2a3940 67px);
}
.tracks li {
    position: relative;
    width: 67px;
    padding-left: 4px;
    line-height: 12px;
    font-size: 8px;
    color: #7a8586;
    background: linear-gradient(#4a5657, #434f50);
}
.tracks li::after {
    content: "";
    position: absolute;
    right: 3px;
    bottom: 3px;
    width: 5px;
    height: 5px;
    border-radius: 50%;
    background-color: #c8f08a;
    box-shadow: 0 0 2px 1px #58852f;
}
.tracks .used {
    color: #f0f4f4;
}
.lanes {
    background:
        repeating-linear-gradient(90deg, #1f2d36 0, #1f2d36 1px, transparent 1px, transparent calc(100% * 6 / 43)),
        repeating-linear-gradient(90deg, #273640 0, #273640 1px, transparent 1px, transparent calc(100% * 2 / 43)),
        repeating-linear-gradient(90deg, rgba(30, 44, 54, 0.35) 0, rgba(30, 44, 54, 0.35) 1px, transparent 1px, transparent calc(100% / 172)),
        repeating-linear-gradient(90deg, #37474f 0, #37474f calc(100% * 8 / 43), #32404a calc(100% * 8 / 43), #32404a calc(100% * 16 / 43));
}
.lanes > div {
    border-bottom: 1px solid #1d2a32;
    min-height: 0;
}
.clips {
    display: grid;
    grid-template-columns: repeat(43, 1fr);
    background-color: #24333a;
}
.clip {
    grid-column: span 6;
    min-width: 0;
    min-height: 0;
    display: flex;
    flex-direction: column;
}
.clip.cut {
    grid-column: span 1;
}
.clip h4 {
    display: flex;
    align-items: center;
    gap: 1px;
    height: 11px;
    padding-left: 1px;
    background-color: #8a1522;
    color: #f3c9cc;
    font-size: 7px;
    font-weight: 500;
}
.clip h4 svg {
    width: 6px;
    height: 7px;
}
.clip .notes {
    width: 100%;
    height: auto;
    flex: 1;
    min-height: 0;
}
.vscroll {
    grid-column: 3;
    grid-row: 1 / 4;
    display: flex;
    flex-direction: column;
    padding-left: 1px;
    background-color: #384547;
}
.vscroll button {
    height: 13px;
    display: grid;
    place-items: center;
}
.vscroll i {
    width: 12px;
    height: 20px;
    margin-bottom: auto;
    background-color: #58656a;
}
.vscroll svg {
    width: 7px;
    height: 7px;
}
.flip {
    transform: rotate(180deg);
}

/* windows taskbar */
.taskbar {
    height: 30px;
    display: flex;
    align-items: center;
    background-color: #70000f;
    color: #f3e4e6;
    font-family: "Open Sans", sans-serif;
    font-size: 7px;
    line-height: 10px;
}
.weather {
    width: 286px;
    display: flex;
    align-items: center;
    gap: 4px;
    padding-left: 12px;
}
.weather svg {
    width: 17px;
    height: 15px;
}
.apps {
    display: flex;
    height: 28px;
}
.apps button {
    width: 28px;
    display: grid;
    place-items: center;
    position: relative;
}
.apps svg {
    width: 16px;
    height: 16px;
}
.apps .search {
    display: flex;
    align-items: center;
    justify-content: center;
    gap: 3px;
    width: 62px;
    height: 22px;
    margin: 3px 3px 3px 4px;
    border-radius: 11px;
    background-color: #7d1522;
    font-size: 8px;
    font-weight: 600;
}
.apps .search svg {
    width: 9px;
    height: 9px;
}
.apps .open::after {
    content: "";
    position: absolute;
    bottom: 1px;
    width: 4px;
    height: 2px;
    border-radius: 1px;
    background-color: #dba3a8;
}
.apps .current {
    background-color: #7c111f;
}
.apps .current::after {
    width: 10px;
    background-color: #f06f78;
}
.tray {
    margin-left: auto;
    padding-right: 12px;
    display: flex;
    align-items: center;
    gap: 9px;
}
.tray svg {
    width: 11px;
    height: 11px;
}
.tray .tray-mic {
    color: #e0666f;
}
.status {
    display: flex;
    align-items: center;
    gap: 4px;
}
.status .battery {
    width: 15px;
    height: 12px;
}
.tray p {
    width: 34px;
    text-align: right;
}
.tray .bell {
    margin-left: -5px;
}

/* stream caption */
.caption {
    padding: 20px 0 1px 451px;
    color: #fff;
    font: 26px/30px "Liberation Sans", Arial, sans-serif;
    white-space: pre;
}
```
